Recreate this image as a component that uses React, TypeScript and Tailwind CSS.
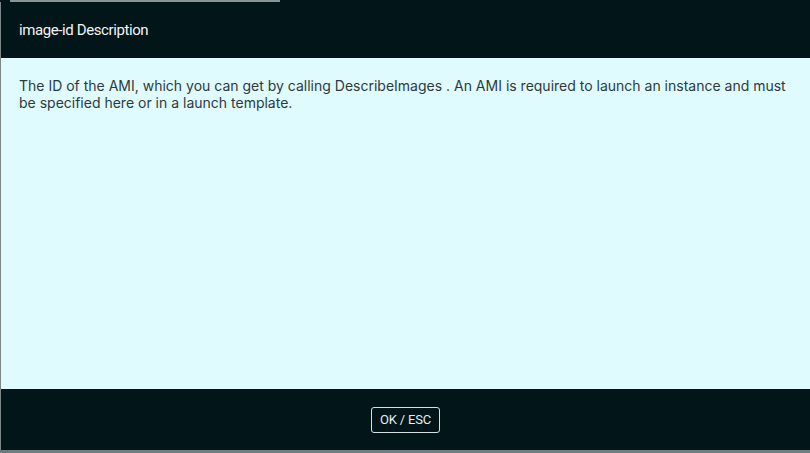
export default function App() {
  return (
    <div className="w-[810px] h-[453px] flex flex-col bg-[#021518] overflow-hidden">
      {/* strip of the page behind the dialog */}
      <div className="h-[2px] flex">
        <div className="w-[10px] bg-[#021518]" />
        <div className="w-[270px] bg-[#8a9696]" />
      </div>
      <div className="flex flex-1 min-h-0">
        <div className="w-[1px] bg-[#7c8888]" />
        <div className="flex-1 flex flex-col">
          <div className="h-[56px] flex items-center px-[18px] bg-[#021518]">
            <h2 className="text-[15px] text-[#f2f6f6] font-['Roboto',sans-serif] tracking-[-0.4px]">
              image-id Description
            </h2>
          </div>
          <div className="flex-1 bg-[#e0fbfd] px-[18px] pt-[19px]">
            <p className="text-[14px] leading-[17px] text-[#2c3a3e] font-['Inter',sans-serif]">
              The ID of the AMI, which you can get by calling DescribeImages . An AMI is required to launch an
              instance and must be specified here or in a launch template.
            </p>
          </div>
          <div className="h-[61px] flex items-center justify-center bg-[#021518]">
            <button className="h-[26px] w-[69px] rounded-[3px] border border-[#d6e2e2] text-[13px] text-[#e6eeee] font-['Roboto',sans-serif] tracking-[-0.2px]">
              OK / ESC
            </button>
          </div>
        </div>
      </div>
      <div className="h-[3px] bg-[#6f7d7d]" />
    </div>
  );
}
